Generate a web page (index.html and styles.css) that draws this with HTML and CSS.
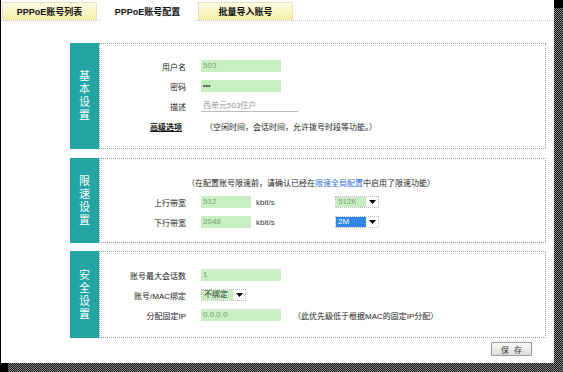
FILE: index.html
```html
<!DOCTYPE html>
<html lang="zh">
<head>
	<meta charset="utf-8" />
	<title>PPPoE账号配置</title>
	<link rel="stylesheet" href="styles.css">
</head>
<body>
	<div class="window">
		<div class="tabs">
			<a class="tab">PPPoE账号列表</a>
			<a class="tab active">PPPoE账号配置</a>
			<a class="tab">批量导入账号</a>
		</div>
		<div class="main">
			<div class="sec sec-basic">
				<div class="side"><span>基</span><span>本</span><span>设</span><span>置</span></div>
				<div class="box">
					<div class="row"><label class="lbl">用户名</label><span class="inp">503</span></div>
					<div class="row"><label class="lbl">密码</label><span class="inp pwd">•••</span></div>
					<div class="row"><label class="lbl">描述</label><span class="inp plain">西单元503住户</span></div>
					<div class="row"><a class="lbl adv">高级选项</a><span class="hint">（空闲时间，会话时间，允许拨号时段等功能。）</span></div>
				</div>
			</div>
			<div class="sec sec-rate">
				<div class="side"><span>限</span><span>速</span><span>设</span><span>置</span></div>
				<div class="box">
					<div class="row notice">（在配置账号限速前，请确认已经在<a class="link">限速全局配置</a>中启用了限速功能）</div>
					<div class="row">
						<label class="lbl">上行带宽</label><span class="inp short">512</span><span class="unit">kbit/s</span>
						<span class="sel"><span class="val">512K</span><span class="arrow"><svg width="7" height="4" viewBox="0 0 7 4"><path d="M0 0h7L3.5 4z" fill="#000"/></svg></span></span>
					</div>
					<div class="row">
						<label class="lbl">下行带宽</label><span class="inp short">2048</span><span class="unit">kbit/s</span>
						<span class="sel picked"><span class="val">2M</span><span class="arrow"><svg width="7" height="4" viewBox="0 0 7 4"><path d="M0 0h7L3.5 4z" fill="#000"/></svg></span></span>
					</div>
				</div>
			</div>
			<div class="sec sec-safe">
				<div class="side"><span>安</span><span>全</span><span>设</span><span>置</span></div>
				<div class="box">
					<div class="row"><label class="lbl">账号最大会话数</label><span class="inp">1</span></div>
					<div class="row">
						<label class="lbl">账号/MAC绑定</label>
						<span class="sel bind"><span class="val">不绑定</span><span class="arrow"><svg width="7" height="4" viewBox="0 0 7 4"><path d="M0 0h7L3.5 4z" fill="#000"/></svg></span></span>
					</div>
					<div class="row"><label class="lbl">分配固定IP</label><span class="inp">0.0.0.0</span><span class="hint">（此优先级低于根据MAC的固定IP分配）</span></div>
				</div>
			</div>
			<div class="actions">
				<button class="btn">保 存</button>
			</div>
		</div>
	</div>
</body>
</html>
```

FILE: styles.css
```css
html, body {
	margin: 0;
	height: 100%;
	overflow: hidden;
}
body {
	width: 563px;
	height: 372px;
	font-family: "Liberation Sans", "Noto Sans CJK SC", sans-serif;
	font-size: 8px;
	color: #222;
	background: #000;
	background:
		linear-gradient(#000, #000) 0 0 / 100% 8px no-repeat,
		linear-gradient(#000, #000) 0 100% / 8px 100% no-repeat,
		repeating-conic-gradient(#111 0 25%, #8a8a8a 0 50%) 0 0 / 2px 2px;
}
.window {
	width: 553px;
	height: 363px;
	background: #fff;
	border-left: 1px solid #000;
}
.tabs {
	display: flex;
	gap: 3px;
	height: 18px;
	padding: 2px 0 0 1px;
	border-bottom: 1px dotted #c4c4c4;
}
.tab {
	width: 95px;
	height: 18px;
	line-height: 18px;
	text-align: center;
	font-weight: bold;
	font-size: 9px;
	color: #111;
	box-sizing: border-box;
	border: 1px solid #e4e0c4;
	border-bottom: none;
	background: linear-gradient(180deg, #fdfbe4 0%, #f6eea6 100%);
}
.tab.active {
	background: #fff;
	border-color: #fff;
	height: 19px;
	margin-bottom: -1px;
}
.main {
	width: 476px;
	margin: 22px 0 0 69px;
}
.sec {
	display: flex;
	margin-bottom: 8px;
}
.sec-basic {
	margin-bottom: 9px;
}
.side {
	width: 29px;
	flex-shrink: 0;
	display: flex;
	flex-direction: column;
	align-items: center;
	justify-content: center;
	background: #23a5a5;
	color: #fff;
	font-size: 11px;
	line-height: 13px;
}
.box {
	flex: 1;
	border: 1px dotted #9a9a9a;
}
.sec-basic .box {
	padding: 12px 0;
}
.sec-rate .box {
	padding: 13px 0 10px;
}
.sec-safe .box {
	padding: 13px 0 12px;
}
.row {
	display: flex;
	align-items: center;
	height: 20px;
}
.lbl {
	width: 86px;
	margin-right: 15px;
	text-align: right;
	flex-shrink: 0;
}
.adv {
	width: auto;
	margin-left: 50px;
	font-weight: bold;
	text-decoration: underline;
	color: #111;
}
.inp {
	width: 80px;
	height: 12px;
	line-height: 12px;
	padding-left: 2px;
	box-sizing: border-box;
	background: #c8efc0;
	color: #7c9a7a;
}
.inp.pwd {
	color: #333;
	font-size: 7px;
}
.inp.plain {
	width: 97px;
	background: #fff;
	border-bottom: 1px solid #bbb;
	color: #999;
}
.inp.short {
	width: 50px;
}
.hint {
	margin-left: 12px;
	color: #222;
}
.sec-basic .hint {
	margin-left: 8px;
}
.notice {
	padding-left: 87px;
}
.link {
	color: #2a6fd6;
}
.unit {
	width: 79px;
	margin-left: 5px;
	color: #333;
}
.sel {
	display: flex;
	align-items: center;
	width: 44px;
	height: 12px;
	box-sizing: border-box;
	border: 1px dotted #bbb;
}
.sel .val {
	flex: 1;
	height: 10px;
	line-height: 10px;
	padding-left: 2px;
	background: #c8efc0;
	color: #7c9a7a;
}
.sel .arrow {
	width: 12px;
	display: flex;
	justify-content: center;
}
.sel.picked .val {
	background: #2f87ea;
	color: #fff;
}
.sel.bind {
	width: 45px;
}
.sel.bind .val {
	color: #333;
}
.actions {
	display: flex;
	justify-content: flex-end;
	margin: -4px 14px 0 0;
}
.btn {
	width: 41px;
	height: 14px;
	padding: 0;
	font-family: inherit;
	font-size: 8px;
	color: #333;
	word-spacing: 3px;
	border: 1px solid #999;
	border-radius: 1px;
	background: linear-gradient(180deg, #fafafa, #dcdcdc);
}
```
